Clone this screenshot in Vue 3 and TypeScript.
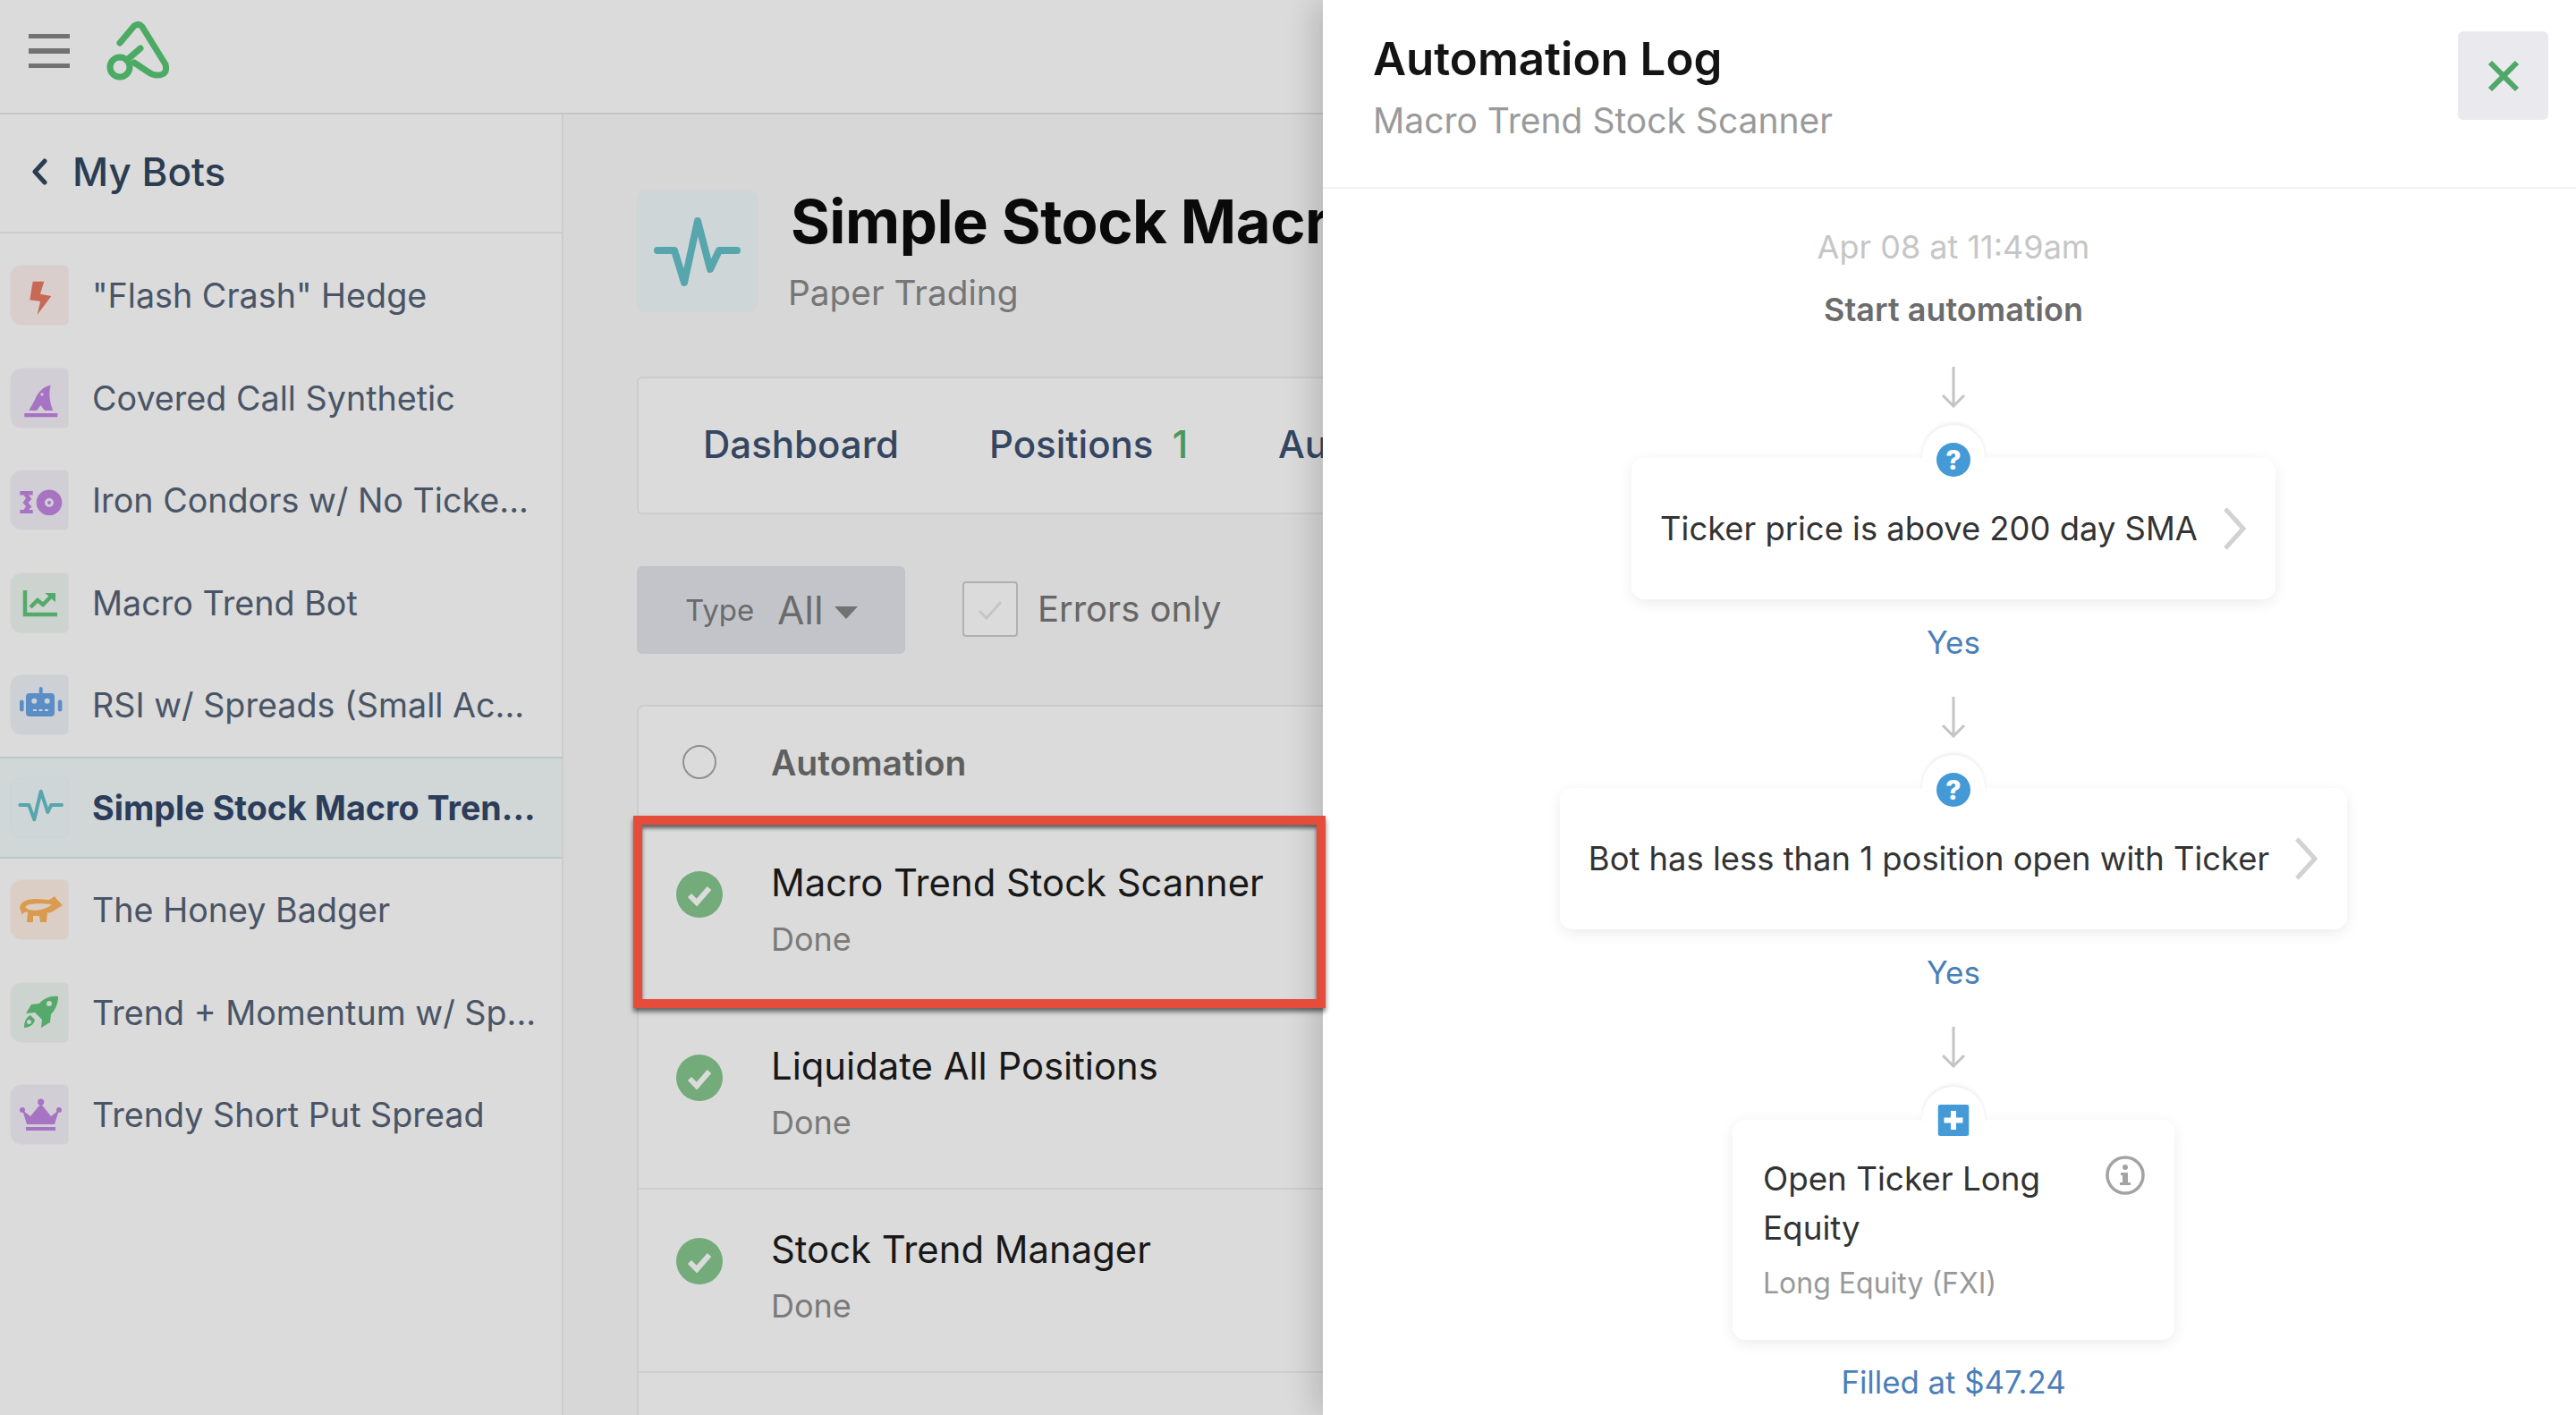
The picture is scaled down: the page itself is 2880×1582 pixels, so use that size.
<script setup lang="ts">
interface Bot {
  name: string
  icon: string
  tint: string
  active?: boolean
}

interface Run {
  name: string
  status: string
}

const bots: Bot[] = [
  { name: '"Flash Crash" Hedge', icon: 'bolt', tint: '#fdf0ed' },
  { name: 'Covered Call Synthetic', icon: 'hat', tint: '#f5f0f9' },
  { name: 'Iron Condors w/ No Ticke...', icon: 'condor', tint: '#f5f0f9' },
  { name: 'Macro Trend Bot', icon: 'chart', tint: '#eff7f2' },
  { name: 'RSI w/ Spreads (Small Ac...', icon: 'robot', tint: '#eff3f9' },
  { name: 'Simple Stock Macro Tren...', icon: 'pulse', tint: '#f2fafb', active: true },
  { name: 'The Honey Badger', icon: 'badger', tint: '#fff2e6' },
  { name: 'Trend + Momentum w/ Sp...', icon: 'rocket', tint: '#eff7f2' },
  { name: 'Trendy Short Put Spread', icon: 'crown', tint: '#f5f0f9' },
]

const runs: Run[] = [
  { name: 'Macro Trend Stock Scanner', status: 'Done' },
  { name: 'Liquidate All Positions', status: 'Done' },
  { name: 'Stock Trend Manager', status: 'Done' },
]
</script>

<template>
  <div class="app">
    <header class="topbar">
      <div class="burger"><span></span><span></span><span></span></div>
      <svg class="logo" width="80" height="70" viewBox="115 18 80 70" fill="none" stroke="#58c674" stroke-width="7" stroke-linecap="round" stroke-linejoin="round">
        <path d="M134 46 L150 27 Q155 23 159 28 L185 70 Q188 82 176 82 Q170 82 165 78 L150 68" />
        <circle cx="134" cy="73" r="11" />
        <path d="M142 65 L157 52" />
      </svg>
    </header>

    <div class="layout">
      <aside class="sidebar">
        <div class="back">
          <svg width="20" height="30" viewBox="0 0 20 30" fill="none" stroke="#33475f" stroke-width="5" stroke-linecap="round" stroke-linejoin="round">
            <path d="M15 3 L4 15 L15 27" />
          </svg>
          <span>My Bots</span>
        </div>
        <ul class="bots">
          <li v-for="bot in bots" :key="bot.name" class="bot" :class="{ active: bot.active }">
            <span class="bot-icon" :style="{ background: bot.tint }">
              <svg width="64" height="60" viewBox="0 0 64 60">
                <path v-if="bot.icon === 'bolt'" fill="#e97b64" d="M24.7 14.7 H37.3 L33 28.7 L45.3 31 L29.7 52 L33 37 L21.3 35.3 Z" />
                <g v-else-if="bot.icon === 'hat'" fill="#c386e4">
                  <path fill-rule="evenodd" d="M44.7 15.7 C36 17 30 24 27 32 L20.3 44 H29 L33.5 38 L38 44 H47.3 C44 36 42 26 44.7 15.7 Z M35 24 L37 26 L35 28 L33 26 Z" />
                  <rect x="15.3" y="47" width="37" height="4.3" />
                </g>
                <g v-else-if="bot.icon === 'condor'" fill="#c386e4">
                  <path d="M10.3 20 H24.7 V24.5 H20 L23.5 29 L19.5 33 L23.5 37.5 L20 41 H24.7 V45 H10.3 V41 H14.5 L17 37 L13.5 33 L17 28 L14.5 24.5 H10.3 Z" />
                  <path fill-rule="evenodd" d="M43 18.5 A14.3 14.3 0 1 0 43 47.1 A14.3 14.3 0 1 0 43 18.5 Z M43 28 A5 5 0 1 1 43 38 A5 5 0 1 1 43 28 Z" />
                  <circle cx="43" cy="33" r="2" />
                </g>
                <g v-else-if="bot.icon === 'chart'" fill="none" stroke="#63c57c" stroke-width="4.5">
                  <path d="M16 16 V43 H52" />
                  <path d="M22 35 L30 27 L36 32 L46 22" />
                  <path d="M41 20 H49 V27 Z" fill="#63c57c" stroke-width="2" />
                </g>
                <g v-else-if="bot.icon === 'robot'" fill="#6ba6e8">
                  <path fill-rule="evenodd" d="M21 17 H45 Q49 17 49 21 V39 Q49 43 45 43 H21 Q17 43 17 39 V21 Q17 17 21 17 Z M26.3 22.7 A3 3 0 1 0 26.3 28.7 A3 3 0 1 0 26.3 22.7 Z M40.7 22.7 A3 3 0 1 0 40.7 28.7 A3 3 0 1 0 40.7 22.7 Z M25 35 V37 H29 V35 Z M31.5 35 V37 H35.5 V35 Z M38 35 V37 H42 V35 Z" />
                  <rect x="31.7" y="10" width="4" height="8" rx="2" />
                  <rect x="10" y="24.5" width="4.6" height="13" rx="2.3" />
                  <rect x="52.8" y="24.5" width="4.6" height="13" rx="2.3" />
                </g>
                <path v-else-if="bot.icon === 'pulse'" fill="none" stroke="#66c1ca" stroke-width="4" stroke-linecap="round" stroke-linejoin="round" d="M10.3 27 H20.3 L26.3 43.3 L33.7 11.7 L41.3 35 L45.3 27 H57" />
                <g v-else-if="bot.icon === 'badger'">
                  <path fill="#ffb55d" d="M10 28 C11 20 20 18 29 18 L43 19 L49 15 L52 19 L58 25 L50 30 C46 33 43 34 41 33 L40 44 H33 L32 37 H25 L25 44 H18 L19 33 C15 31 13 36 13 36 Z" />
                  <path fill="#fff2e6" d="M16 27 C20 22 34 23 46 24 C40 30 28 32 20 30 Z" />
                </g>
                <g v-else-if="bot.icon === 'rocket'" fill="#63c57c">
                  <path fill-rule="evenodd" d="M53 12 C45 11 37 14 32 20 L23 21 L17 31 L27 30 L35 38 L34 47 L44 41 L45 32 C50 27 53 20 53 12 Z M43 17 A3 3 0 1 1 43 23 A3 3 0 1 1 43 17 Z" />
                  <path fill-rule="evenodd" d="M22 33 L27 38 C26 44 20 47 15 47 C15 41 17 35 22 33 Z M20.5 38 A2.5 2.5 0 1 0 20.5 43 A2.5 2.5 0 1 0 20.5 38 Z" />
                </g>
                <g v-else-if="bot.icon === 'crown'" fill="#c386e4">
                  <path d="M13 25 L22 32 L33.7 18 L45 32 L54 25 L49 41 H18 Z" />
                  <circle cx="33.7" cy="16" r="3.6" />
                  <circle cx="13" cy="25" r="3" />
                  <circle cx="54" cy="25" r="3" />
                  <rect x="17" y="44" width="33" height="4" />
                </g>
              </svg>
            </span>
            <span class="bot-name">{{ bot.name }}</span>
          </li>
        </ul>
      </aside>

      <main class="main">
        <div class="bot-head">
          <div class="head-icon">
            <svg width="135" height="135" viewBox="0 0 135 135" fill="none" stroke="#66c1ca" stroke-width="8" stroke-linecap="round" stroke-linejoin="round">
              <path d="M23 67 H42 L53 103 L68 34 L82 88 L92 67 H112" />
            </svg>
          </div>
          <div class="head-text">
            <h1>Simple Stock Macro Trend Bot</h1>
            <p>Paper Trading</p>
          </div>
        </div>

        <nav class="tabs">
          <span class="tab">Dashboard</span>
          <span class="tab">Positions <b>1</b></span>
          <span class="tab">Automations</span>
        </nav>

        <div class="filters">
          <div class="type-select">
            <span class="type-label">Type</span>
            <span class="type-value">All</span>
            <i class="caret"></i>
          </div>
          <label class="errors">
            <span class="checkbox">
              <svg width="40" height="40" viewBox="0 0 40 40" fill="none" stroke="#e6e6e6" stroke-width="3">
                <path d="M8 22 L16 30 L32 12" />
              </svg>
            </span>
            Errors only
          </label>
        </div>

        <section class="table">
          <div class="table-head">
            <span class="radio-slot"><i class="radio"></i></span>
            <strong>Automation</strong>
          </div>
          <div v-for="run in runs" :key="run.name" class="run">
            <svg class="check" width="52" height="52" viewBox="0 0 52 52">
              <circle cx="26" cy="26" r="26" fill="#88c78f" />
              <path d="M15 27 L23 35 L37 19" fill="none" stroke="#fff" stroke-width="6" />
            </svg>
            <div>
              <div class="run-name">{{ run.name }}</div>
              <div class="run-status">{{ run.status }}</div>
            </div>
          </div>
        </section>
      </main>
    </div>

    <div class="scrim"></div>

    <aside class="drawer">
      <div class="drawer-head">
        <div>
          <h2>Automation Log</h2>
          <p>Macro Trend Stock Scanner</p>
        </div>
        <button class="close">
          <svg width="36" height="34" viewBox="0 0 36 34" fill="none" stroke="#4fa868" stroke-width="6">
            <path d="M3 2 L33 32 M33 2 L3 32" />
          </svg>
        </button>
      </div>

      <div class="flow">
        <div class="flow-date">Apr 08 at 11:49am</div>
        <div class="flow-start">Start automation</div>

        <svg class="arrow first" width="28" height="46" viewBox="0 0 28 46" fill="none" stroke="#c4c4c4" stroke-width="3">
          <path d="M14 0 V44 M2 32 L14 44 L26 32" />
        </svg>
        <div class="step">
          <span class="notch"></span>
          <span class="badge round">?</span>
          <span class="step-text">Ticker price is above 200 day SMA</span>
          <svg width="26" height="48" viewBox="0 0 26 48" fill="none" stroke="#d2d2d2" stroke-width="5">
            <path d="M3 2 L23 24 L3 46" />
          </svg>
        </div>
        <div class="answer">Yes</div>

        <svg class="arrow" width="28" height="46" viewBox="0 0 28 46" fill="none" stroke="#c4c4c4" stroke-width="3">
          <path d="M14 0 V44 M2 32 L14 44 L26 32" />
        </svg>
        <div class="step">
          <span class="notch"></span>
          <span class="badge round">?</span>
          <span class="step-text">Bot has less than 1 position open with Ticker</span>
          <svg width="26" height="48" viewBox="0 0 26 48" fill="none" stroke="#d2d2d2" stroke-width="5">
            <path d="M3 2 L23 24 L3 46" />
          </svg>
        </div>
        <div class="answer">Yes</div>

        <svg class="arrow" width="28" height="46" viewBox="0 0 28 46" fill="none" stroke="#c4c4c4" stroke-width="3">
          <path d="M14 0 V44 M2 32 L14 44 L26 32" />
        </svg>
        <div class="step action">
          <span class="notch"></span>
          <svg class="badge" width="35" height="35" viewBox="0 0 35 35">
            <rect width="35" height="35" rx="3" fill="#439ad6" />
            <path d="M17.5 7 V28 M7 17.5 H28" stroke="#fff" stroke-width="6" />
          </svg>
          <div class="action-body">
            <div class="action-title">Open Ticker Long Equity</div>
            <div class="action-sub">Long Equity (FXI)</div>
          </div>
          <svg class="info" width="44" height="44" viewBox="0 0 44 44">
            <circle cx="22" cy="22" r="20" fill="none" stroke="#a3a3a3" stroke-width="3.5" />
            <circle cx="22" cy="13" r="3" fill="#a3a3a3" />
            <path d="M17 19 H25 V30 H28 V33 H16 V30 H19 V22 H17 Z" fill="#a3a3a3" />
          </svg>
        </div>
        <div class="filled">Filled at $47.24</div>
      </div>
    </aside>

    <div class="callout"></div>
  </div>
</template>

<style scoped>
* {
  box-sizing: border-box;
}

.app {
  position: relative;
  width: 2880px;
  height: 1582px;
  overflow: hidden;
  background: #fff;
  font-family: Inter, "Liberation Sans", sans-serif;
  color: #333;
}

.topbar {
  display: flex;
  align-items: center;
  height: 128px;
  padding-left: 32px;
  padding-bottom: 12px;
  gap: 37px;
  border-bottom: 2px solid #e6e6e6;
}

.burger {
  display: flex;
  flex-direction: column;
  gap: 11px;
  width: 46px;
}

.burger span {
  height: 5.5px;
  background: #858585;
}

.logo {
  margin-top: -4px;
}

.layout {
  display: flex;
  height: 1454px;
}

.sidebar {
  flex: none;
  width: 630px;
  border-right: 2px solid #eee;
}

.back {
  display: flex;
  align-items: center;
  gap: 26px;
  height: 133px;
  padding: 0 0 3px 35px;
  border-bottom: 2px solid #eee;
  font-size: 44px;
  font-weight: 500;
  color: #33475f;
}

.bots {
  list-style: none;
  margin: 0;
  padding: 12px 0 0;
}

.bot {
  display: flex;
  align-items: center;
  height: 114.5px;
  padding-left: 12px;
  gap: 27px;
  border-top: 2px solid transparent;
  border-bottom: 2px solid transparent;
}

.bot.active {
  background: #f4fbfb;
  border-color: #d5ece8;
}

.bot-icon {
  flex: none;
  display: block;
  width: 64px;
  height: 66px;
  padding-top: 3px;
  border-radius: 12px 4px 4px 12px;
  box-shadow: 0 0 0 1px rgba(0, 0, 0, 0.02);
}

.bot-icon svg {
  display: block;
}

.bot-name {
  font-size: 37.7px;
  color: #566477;
  white-space: nowrap;
}

.bot.active .bot-name {
  font-weight: 700;
  color: #33476a;
}

.main {
  flex: 1;
  min-width: 0;
  padding: 85px 0 0 82px;
  background: #fbfbfb;
}

.bot-head {
  display: flex;
  align-items: center;
  gap: 37px;
  height: 135px;
  white-space: nowrap;
}

.head-icon {
  flex: none;
  width: 135px;
  height: 135px;
  border-radius: 10px;
  background: #f2fafb;
  box-shadow: 0 0 0 1px rgba(0, 0, 0, 0.02);
}

.head-icon svg {
  display: block;
}

.head-text {
  padding-top: 3px;
}

.head-text h1 {
  margin: 0;
  font-size: 67px;
  line-height: 72px;
  font-weight: 700;
  letter-spacing: -0.5px;
  color: #0c0c0c;
}

.head-text p {
  margin: 18px 0 0 -3px;
  font-size: 38.8px;
  line-height: 50px;
  color: #8a8a8a;
}

.tabs {
  display: flex;
  align-items: center;
  gap: 101px;
  width: 1400px;
  height: 154px;
  margin-top: 73px;
  padding-left: 72px;
  padding-bottom: 4px;
  background: #fff;
  border: 2px solid #eeeeee;
  border-radius: 6px;
  white-space: nowrap;
  font-size: 42px;
  font-weight: 500;
  color: #3d5272;
}

.tab b {
  margin-left: 10px;
  font-weight: 500;
  color: #58b06e;
}

.filters {
  display: flex;
  align-items: center;
  gap: 64px;
  height: 98px;
  margin-top: 58px;
}

.type-select {
  display: flex;
  align-items: center;
  width: 300px;
  height: 98px;
  padding-left: 54px;
  border-radius: 6px;
  background: #e3e5ea;
  color: #7d7d7d;
}

.type-label {
  font-size: 33px;
  width: 103px;
}

.type-value {
  font-size: 44px;
}

.caret {
  width: 0;
  height: 0;
  margin: 6px 0 0 12px;
  border-left: 13px solid transparent;
  border-right: 13px solid transparent;
  border-top: 14px solid #858585;
}

.errors {
  display: flex;
  align-items: center;
  gap: 22px;
  margin-top: -3px;
  font-size: 40px;
  color: #777;
}

.checkbox {
  display: flex;
  align-items: center;
  justify-content: center;
  width: 62px;
  height: 62px;
  border: 2px solid #cdcdcd;
  border-radius: 4px;
  background: #fff;
}

.table {
  width: 1400px;
  height: 900px;
  margin-top: 57px;
  background: #fff;
  border: 2px solid #eeeeee;
  border-radius: 8px;
}

.table-head {
  display: flex;
  align-items: center;
  height: 130px;
  padding: 0 0 6px 42px;
  gap: 54px;
  font-size: 39px;
  color: #6f6f6f;
}

.table-head strong {
  font-weight: 600;
}

.radio-slot {
  display: flex;
  justify-content: center;
  width: 52px;
}

.radio {
  width: 38px;
  height: 38px;
  border: 2px solid #a8a8a8;
  border-radius: 50%;
}

.run {
  display: flex;
  align-items: flex-start;
  height: 205px;
  padding: 40px 0 0 42px;
  gap: 54px;
  border-bottom: 2px solid #f0f0f0;
}

.check {
  flex: none;
  margin-top: 14px;
}

.run-name {
  font-size: 41.8px;
  line-height: 54px;
  color: #1d1d1d;
}

.run-status {
  margin-top: 16px;
  font-size: 36px;
  line-height: 40px;
  color: #8f8f8f;
}

.scrim {
  position: absolute;
  inset: 0;
  background: rgba(0, 0, 0, 0.14);
}

.drawer {
  position: absolute;
  top: 0;
  right: 0;
  bottom: 0;
  width: 1401px;
  background: #fff;
  box-shadow: -12px 0 30px rgba(0, 0, 0, 0.14);
}

.drawer-head {
  display: flex;
  justify-content: space-between;
  height: 211px;
  padding: 35px 31px 0 56px;
  border-bottom: 2px solid #f2f2f2;
}

.drawer-head h2 {
  margin: 0;
  font-size: 51px;
  line-height: 62px;
  font-weight: 600;
  color: #141414;
}

.drawer-head p {
  margin: 13px 0 0;
  font-size: 39px;
  line-height: 50px;
  color: #9a9a9a;
}

.close {
  display: flex;
  align-items: center;
  justify-content: center;
  width: 101px;
  height: 99px;
  padding: 0;
  border: 0;
  border-radius: 6px;
  background: #e9e9ee;
}

.flow {
  display: flex;
  flex-direction: column;
  align-items: center;
  padding: 43px 0 0 9px;
}

.flow-date {
  font-size: 36px;
  line-height: 44px;
  color: #c6c6c6;
}

.flow-start {
  margin-top: 26px;
  font-size: 36px;
  line-height: 44px;
  font-weight: 600;
  color: #6c6c6c;
}

.arrow {
  flex: none;
  margin-top: 39px;
}

.arrow.first {
  margin-top: 42px;
}

.step {
  position: relative;
  display: flex;
  align-items: center;
  gap: 28px;
  height: 158px;
  margin-top: 56px;
  padding: 0 33px 0 32px;
  border-radius: 14px;
  background: #fff;
  box-shadow: 0 4px 16px rgba(0, 0, 0, 0.08);
}

.step-text {
  font-size: 36.4px;
  white-space: nowrap;
  color: #333;
}

.notch {
  position: absolute;
  left: 50%;
  top: -37px;
  width: 70px;
  height: 40px;
  margin-left: -35px;
  border-radius: 35px 35px 0 0;
  background: #fff;
  box-shadow: 0 -2px 4px rgba(0, 0, 0, 0.08);
}

.badge {
  position: absolute;
  left: 50%;
  top: -17px;
  transform: translateX(-50%);
}

.badge.round {
  width: 38px;
  height: 38px;
  border-radius: 50%;
  background: #439ad6;
  color: #fff;
  font-size: 30px;
  font-weight: 800;
  line-height: 38px;
  text-align: center;
}

.answer {
  margin-top: 26px;
  font-size: 35px;
  line-height: 44px;
  color: #4a7fb8;
}

.step.action {
  align-items: flex-start;
  width: 494px;
  height: 246px;
  margin-top: 58px;
  padding: 38px 33px 0 34px;
  gap: 0;
}

.action-body {
  width: 384px;
}

.action-title {
  width: 340px;
  font-size: 36.8px;
  line-height: 55px;
  color: #333;
}

.action-sub {
  margin-top: 15px;
  font-size: 32px;
  line-height: 40px;
  color: #999;
}

.info {
  flex: none;
  margin-top: 2px;
}

.filled {
  margin-top: 25px;
  font-size: 34.8px;
  line-height: 44px;
  color: #4a7fb8;
}

.callout {
  position: absolute;
  left: 708px;
  top: 912px;
  width: 774px;
  height: 215px;
  border: 10px solid #e64c3c;
  box-shadow: 0 4px 5px rgba(0, 0, 0, 0.55), inset 0 4px 4px rgba(0, 0, 0, 0.55);
}
</style>

<style>
html,
body {
  margin: 0;
  background: #fff;
}
</style>
